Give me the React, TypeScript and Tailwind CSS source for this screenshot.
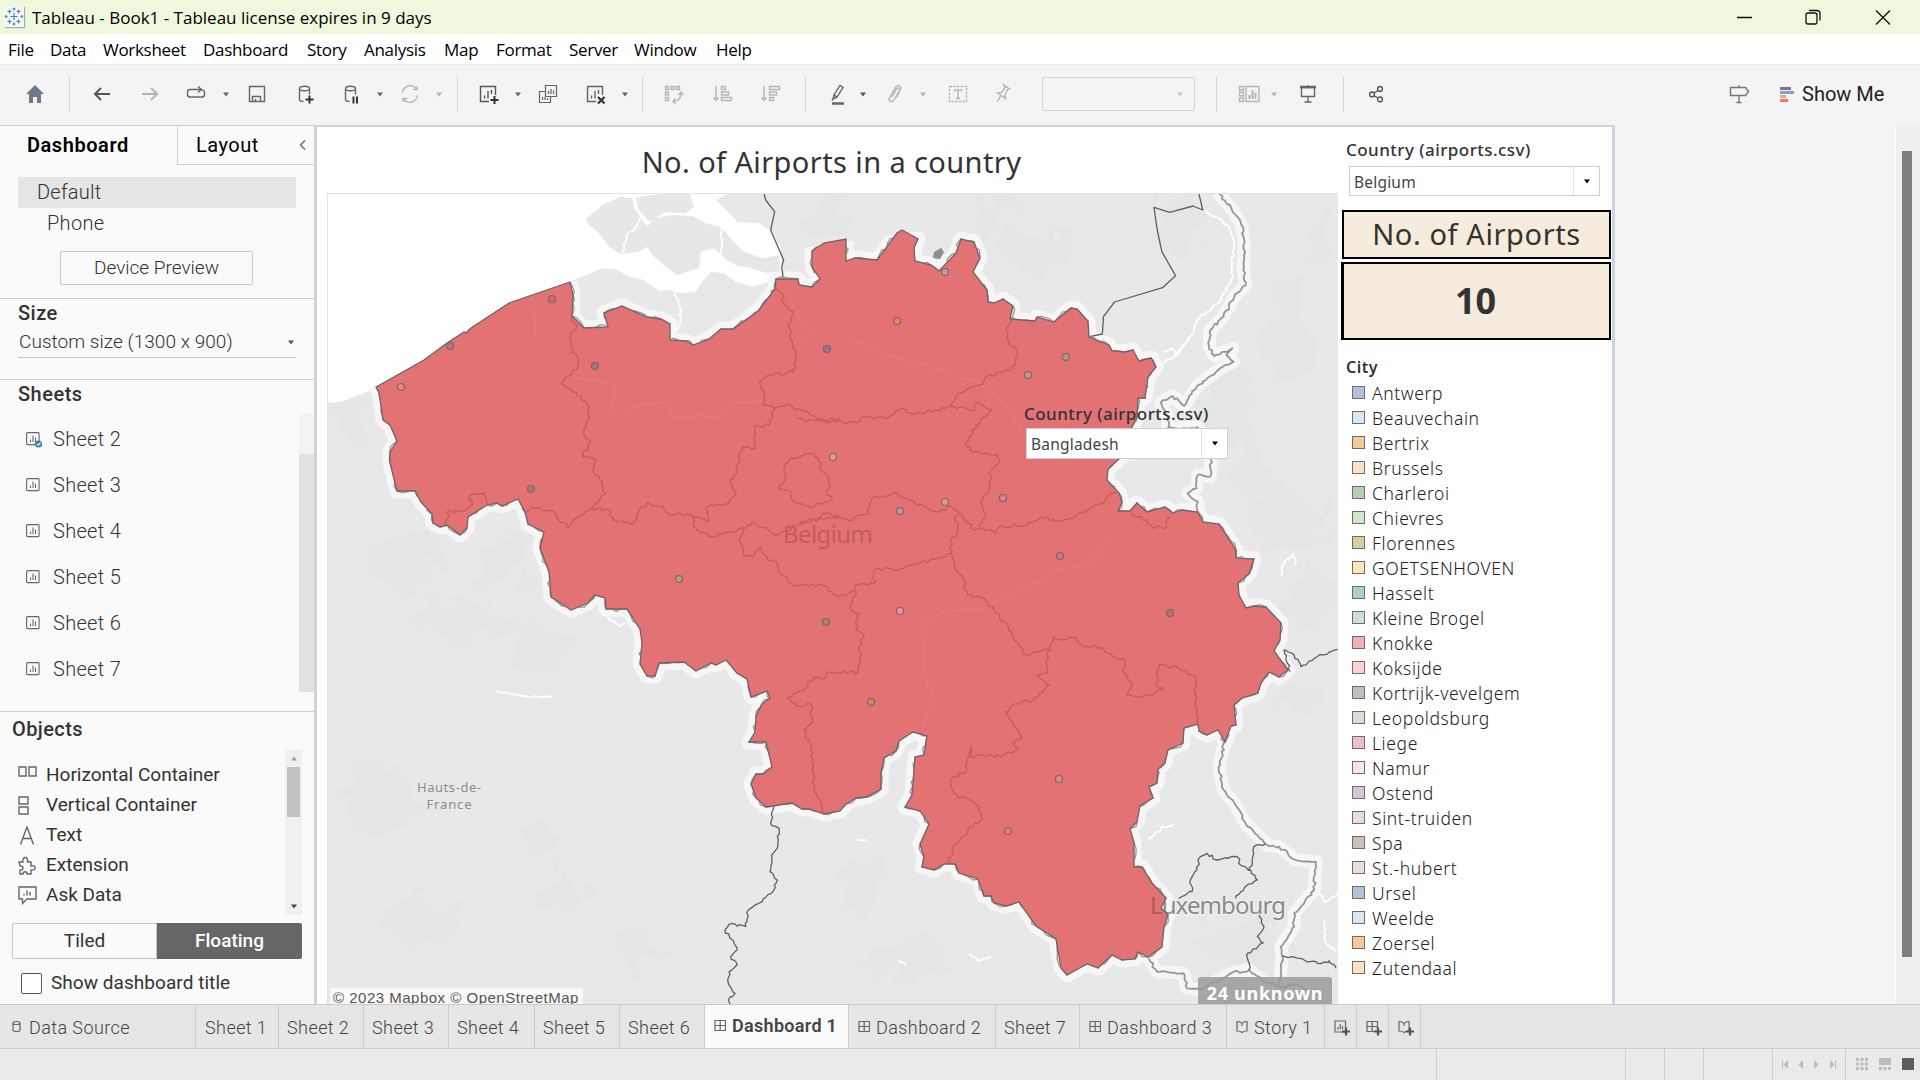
import React from "react";

/* ---------- toolbar glyphs (24px grid) ---------- */

const glyphs: Record<string, React.ReactNode> = {
  home: (
    <path d="M12 3 3 12h3v9h4v-6h4v6h4v-9h3z" fill="#6d7a8c" stroke="none" />
  ),
  back: <path d="M20 12H5M11 6l-6 6 6 6" strokeWidth="2" />,
  forward: <path d="M4 12h15M13 6l6 6-6 6" strokeWidth="2" />,
  replay: <path d="M8 7.500H6a2.500 2.500 0 0 0-2.500 2.500v2.500A2.500 2.500 0 0 0 6 15h12a2.500 2.500 0 0 0 2.500-2.500V10A2.500 2.500 0 0 0 18 8M8 7.500h9M14 4.500l3.500 3-3.500 3" />,
  save: <path d="M4.500 4.500h15v15h-15zM7.500 19.500v-5h8v5M10.500 19.500v-2.500" />,
  dbPlus: (
    <>
      <path d="M6.500 6.500c0-3 10-3 10 0s-10 3-10 0v11c0 1 1 2 4 2M16.500 6.500v6" />
      <path d="M16.500 13.500v8M12.500 17.500h8" stroke="#333" strokeWidth="2" />
    </>
  ),
  dbPause: (
    <>
      <path d="M6.500 6.500c0-3 10-3 10 0s-10 3-10 0v11c0 1 1 2 4 2M16.500 6.500v6" />
      <path d="M14.500 14.500v7M18 14.500v7" stroke="#333" strokeWidth="2" />
    </>
  ),
  refresh: <path d="M4.500 10.500a8 8 0 0 1 14-4M19.500 13.500a8 8 0 0 1-14 4M15 7.500h4v-3M9 16.500H5v3" />,
  chartPlus: (
    <>
      <path d="M19.500 13V4.500h-15v15H13M8.500 16.500v-3M12 16.500V9M15.500 12V8" />
      <path d="M18.500 14v8M14.500 18h8" stroke="#333" strokeWidth="2" />
    </>
  ),
  duplicate: <path d="M9.500 3.500h11v11h-11zM9.500 9.500h-6v11h11v-6M12.500 12v-3M15 12V7M17.500 12V8.500M6.500 18v-3M9 18v-3M11.500 18v-2" strokeWidth="1.200" />,
  chartX: (
    <>
      <path d="M19.500 13V4.500h-15v15H13M8.500 16.500v-3M12 16.500V9M15.500 12V8" />
      <path d="m15 15 6.500 6.500M21.500 15 15 21.500" stroke="#333" strokeWidth="2.200" />
    </>
  ),
  swap: <path d="M3.500 4.500h3v3h-3zM9 4.500h3v3H9zM14.500 4.500h3v3h-3zM3.500 10h3v3h-3zM3.500 15.500h3v3h-3zM11 19.500c5 0 8-3 8-9M16.500 13l2.500-3 2.500 3M13.500 22 11 19.500l2.500-3" />,
  sortAsc: <path d="M5 4v14M2.500 15.500 5 18.500l2.500-3M10.500 4.500h4v3h-4zM10.500 10h7v3h-7zM10.500 15.500h10v3h-10z" />,
  sortDesc: <path d="M5 4v14M2.500 15.500 5 18.500l2.500-3M10.500 4.500h10v3h-10zM10.500 10h7v3h-7zM10.500 15.500h4v3h-4z" />,
  pen: (
    <>
      <path d="m8 13 6-9.500 3 2-6 9.500zM8 13l-1 4 4-2M6 18.500l1-1.500" />
      <path d="M6 21.500h12" strokeWidth="2.500" />
    </>
  ),
  clip: <path d="m9 15 4.500-8c1.500-2 4-.5 3 1.500L11 18c-2 3.500-6 1-4.500-2l6-10.500C14.500 2 19 4 17.500 7.500L13 16" />,
  text: (
    <>
      <path d="M3.500 4.500h17v15h-17z" strokeDasharray="2.500 1.200" />
      <path d="M8.500 9.500V8h7v1.500M12 8v8.500M10 16.500h4" strokeWidth="1.300" />
    </>
  ),
  pin: <path d="m13 3 5.500 4-2 .5-2.500 5 .5 4L6.500 11l4-.5 3.500-5zM9.500 14l-3 5.500" />,
  layout: (
    <>
      <path d="M2.500 4.500h4v3.500h-4zM2.500 10.200h4v3.500h-4zM2.500 16h4v3.500h-4zM9 4.500h13v15H9z" />
      <path d="M12.500 17v-4M15.500 17V8M18.500 17v-6" strokeWidth="2" />
    </>
  ),
  present: (
    <>
      <path d="M5.500 5.500h13v9h-13zM12 15v5M8.500 20h7M12 3v2" />
      <path d="M4 5h16" strokeWidth="2.500" />
    </>
  ),
  share: <path d="M16 4.500a2.400 2.400 0 1 0 0 4.800 2.400 2.400 0 0 0 0-4.800M8 10a2.400 2.400 0 1 0 0 4.800A2.400 2.400 0 0 0 8 10M16 15a2.400 2.400 0 1 0 0 4.800 2.400 2.400 0 0 0 0-4.800M10 11l4-2.500M10 13.700l4 2.300" />,
  sign: <path d="M3.500 5.500h15l3 4-3 4h-15zM12 3v2.500M12 13.500V20M9.500 20.500h5" />,
};

type Tool = [string, string, string];

const tools: Tool[] = [
  ["home", "ml-[23px]", "text-[#666]"],
  ["sep", "ml-[22px]", ""],
  ["back", "ml-[20px]", "text-[#555]"],
  ["forward", "ml-[24px]", "text-[#b5b5b5]"],
  ["replay", "ml-[22px]", "text-[#666]"],
  ["caret", "ml-[14px]", "text-[#666]"],
  ["save", "ml-[15px]", "text-[#666]"],
  ["dbPlus", "ml-[24px]", "text-[#666]"],
  ["dbPause", "ml-[22px]", "text-[#666]"],
  ["caret", "ml-[13px]", "text-[#666]"],
  ["refresh", "ml-[14px]", "text-[#b5b5b5]"],
  ["caret", "ml-[13px]", "text-[#b5b5b5]"],
  ["sep", "ml-[14px]", ""],
  ["chartPlus", "ml-[18px]", "text-[#555]"],
  ["caret", "ml-[14px]", "text-[#666]"],
  ["duplicate", "ml-[14px]", "text-[#666]"],
  ["chartX", "ml-[23px]", "text-[#666]"],
  ["caret", "ml-[14px]", "text-[#666]"],
  ["sep", "ml-[13px]", ""],
  ["swap", "ml-[19px]", "text-[#b5b5b5]"],
  ["sortAsc", "ml-[25px]", "text-[#b5b5b5]"],
  ["sortDesc", "ml-[24px]", "text-[#b5b5b5]"],
  ["sep", "ml-[22px]", ""],
  ["pen", "ml-[20px]", "text-[#666]"],
  ["caret", "ml-[9px]", "text-[#555]"],
  ["clip", "ml-[16px]", "text-[#b5b5b5]"],
  ["caret", "ml-[12px]", "text-[#b5b5b5]"],
  ["text", "ml-[19px]", "text-[#b5b5b5]"],
  ["pin", "ml-[21px]", "text-[#b5b5b5]"],
  ["combo", "ml-[27px]", ""],
  ["sep", "ml-[21px]", ""],
  ["layout", "ml-[20px]", "text-[#b5b5b5]"],
  ["caret", "ml-[9px]", "text-[#b5b5b5]"],
  ["present", "ml-[18px]", "text-[#666]"],
  ["sep", "ml-[23px]", ""],
  ["share", "ml-[20px]", "text-[#555]"],
  ["sign", "ml-auto", "text-[#777]"],
];

function Caret({ className = "" }: { className?: string }) {
  return (
    <svg className={"shrink-0 " + className} width="8" height="5" viewBox="0 0 8 5">
      <path d="M1 .5h6L4 4.500z" fill="currentColor" />
    </svg>
  );
}

function ToolItem({ tool: [kind, gap, color] }: { tool: Tool }) {
  if (kind === "sep") return <div className={`${gap} h-[35px] w-px shrink-0 bg-[#d4d4d4]`} />;
  if (kind === "caret") return <Caret className={`${gap} ${color}`} />;
  if (kind === "combo")
    return (
      <div className={`${gap} flex h-[34px] w-[153px] shrink-0 items-center justify-end rounded-[2px] border border-[#d4d4d4] pr-2.5`}>
        <Caret className="text-[#c8c8c8]" />
      </div>
    );
  return (
    <svg className={`${gap} ${color} shrink-0`} width="24" height="24" viewBox="0 0 24 24" fill="none" stroke="currentColor" strokeWidth="1.400">
      {glyphs[kind]}
    </svg>
  );
}

function TitleBar() {
  return (
    <div className="flex h-[34px] shrink-0 items-center bg-[#eef8dc] pt-px pl-1 font-['Open_Sans',sans-serif] text-[17px] text-black">
      <svg width="20" height="21" viewBox="0 0 20 21" className="-mt-0.5 bg-[#f4f6f8] shadow-[1px_1px_1px_#aaa]" stroke="#3d86b4" strokeWidth="1.200">
        <path d="M10 7v7M6.500 10.500h7M5.500 3.500v4M3.500 5.500h4M14.500 3.500v4M12.500 5.500h4M5.500 13.500v4M3.500 15.500h4M14.500 13.500v4M12.500 15.500h4M10 1.500v3M8.500 3h3M10 16.500v3M8.500 18h3M2 9v3M1 10.500h2.500M18 9v3M16.500 10.500H19" />
      </svg>
      <span className="ml-2">Tableau - Book1 - Tableau license expires in 9 days</span>
      <svg className="mr-7 ml-auto" width="156" height="20" viewBox="0 0 156 20" fill="none" stroke="#111" strokeWidth="1.300">
        <path d="M1 9.500h15M140 2.500l14 14M154 2.500l-14 14" />
        <rect x="70" y="5" width="11" height="11" rx="2" />
        <path d="M73 2.500h8a3 3 0 0 1 3 3v7" />
      </svg>
    </div>
  );
}

const menus: [string, string][] = [
  ["File", "w-[42px]"],
  ["Data", "w-[53px]"],
  ["Worksheet", "w-[100px]"],
  ["Dashboard", "w-[104px]"],
  ["Story", "w-[57px]"],
  ["Analysis", "w-[80px]"],
  ["Map", "w-[52px]"],
  ["Format", "w-[73px]"],
  ["Server", "w-[65px]"],
  ["Window", "w-[82px]"],
  ["Help", "w-[60px]"],
];

function MenuBar() {
  return (
    <div className="flex h-[30px] shrink-0 items-center bg-white pt-0.5 pl-2 font-['Open_Sans',sans-serif] text-[17px] tracking-[-0.300px] text-black">
      {menus.map(([label, width]) => (
        <span key={label} className={`${width} whitespace-nowrap`}>{label}</span>
      ))}
    </div>
  );
}

function Toolbar() {
  return (
    <div className="flex h-[61px] shrink-0 items-center border-t border-[#ebebeb] bg-[#f4f4f4] pb-0.5">
      {tools.map((t, i) => (
        <ToolItem key={i} tool={t} />
      ))}
      <svg className="ml-[29px]" width="16" height="18" viewBox="0 0 16 18">
        <path d="M0 2h11v3H0z" fill="#8a6c9c" />
        <path d="M0 6h14v3H0z" fill="#7ba3cd" />
        <path d="M0 10h6v3H0z" fill="#f7a37c" />
        <path d="M0 14h8v3H0z" fill="#fb6f7f" />
      </svg>
      <span className="mr-9 ml-1.5 w-[82px] whitespace-nowrap text-[20px] text-[#222]">Show Me</span>
    </div>
  );
}

/* ---------- side pane ---------- */

function SheetIcon({ used = false }: { used?: boolean }) {
  return (
    <svg width="18" height="18" viewBox="0 0 18 18" fill="none" stroke="#666" strokeWidth="1.100">
      <rect x="0.600" y="2.600" width="12.500" height="12" rx="1" />
      <path d="M4.500 12V9.500M7 12V5.500M9.500 12V7.500" />
      {used && (
        <>
          <circle cx="12.500" cy="14" r="3.600" fill="#3b86a8" stroke="none" />
          <path d="m11 14 1.200 1.300 2.300-2.600" stroke="#fff" />
        </>
      )}
    </svg>
  );
}

const objects: [string, React.ReactNode][] = [
  ["Horizontal Container", <path key="p" d="M1 1h7v9H1zM11 1h7v9h-7z" />],
  ["Vertical Container", <path key="p" d="M1 1h9v7H1zM1 11h9v7H1z" />],
  ["Text", <path key="p" d="M2.500 18.500 9 1l6.500 17.500M4.800 12.500h8.400" />],
  ["Extension", <path key="p" d="M1 6h4c-1.500-6 6-6 4.500 0H13v4c5-2 6 5 0 4v4H9c0-3-4-3-4 0H2v-4c4 0 4-4 0-4z" />],
  ["Ask Data", <path key="p" d="M1 1h17v12H9l-4.500 4.500V13H1zM6 9.500V8M9 9.500V4.500M12 9.500V6" />],
];

function SidePane() {
  return (
    <div className="flex h-full w-[314px] shrink-0 flex-col border-t border-[#cfcfcf] bg-[#fafafa] text-[20px] font-light text-[#333]">
      <div className="flex h-[39px] shrink-0 text-black">
        <div className="w-[177px] pt-1 pl-[27px] font-semibold tracking-[0.550px]">Dashboard</div>
        <div className="flex flex-1 items-center border-b border-l border-[#cfcfcf] pl-[18px] font-normal">
          <span className="tracking-[0.500px]">Layout</span>
          <svg className="mr-2 ml-auto" width="7" height="10" viewBox="0 0 7 10" fill="none" stroke="#666" strokeWidth="1.300">
            <path d="M6 .5 1.500 5 6 9.500" />
          </svg>
        </div>
      </div>
      <div className="flex h-[134px] shrink-0 flex-col border-b border-[#cfcfcf] pt-3">
        <div className="mx-[18px] flex h-[31px] shrink-0 items-center bg-[#e5e5e5] pb-0.5 pl-[19px] tracking-[0.250px]">Default</div>
        <div className="flex h-[31px] shrink-0 items-center pb-0.5 pl-[47px] tracking-[0.300px]">Phone</div>
        <div className="mt-3 ml-[60px] flex h-[34px] w-[193px] items-center justify-center rounded-[2px] border border-[#c6c6c6] pt-px text-[19px]">Device Preview</div>
      </div>
      <div className="h-[81px] shrink-0 border-b border-[#cfcfcf] px-[18px]">
        <div className="h-[29px] leading-[28px] font-medium tracking-[0.500px]">Size</div>
        <div className="flex h-[30px] items-center justify-between border-b border-[#c6c6c6] pr-px text-[19px]">
          <span className="pl-px tracking-[0.050px]">Custom size (1300 x 900)</span>
          <Caret className="text-[#555]" />
        </div>
      </div>
      <div className="flex h-[332px] shrink-0 flex-col border-b border-[#cfcfcf]">
        <div className="h-[34px] pl-[18px] leading-[28px] font-medium tracking-[0.500px]">Sheets</div>
        <div className="flex flex-1">
          <div className="flex-1 pt-0.5">
            {["Sheet 2", "Sheet 3", "Sheet 4", "Sheet 5", "Sheet 6", "Sheet 7"].map((s, i) => (
              <div key={s} className="flex h-[46px] items-center pl-[26px]">
                <SheetIcon used={i === 0} />
                <span className="pl-[9px] tracking-[0.300px]">{s}</span>
              </div>
            ))}
          </div>
          <div className="h-[278px] w-[15px] bg-[#f3f3f3] pt-10">
            <div className="h-[238px] bg-[#e1e1e1]" />
          </div>
        </div>
      </div>
      <div className="h-[38px] pl-3 leading-[34px] font-medium tracking-[0.400px]">Objects</div>
      <div className="flex h-[165px] shrink-0 pr-3 font-normal">
        <div className="flex-1 pt-2.5">
          {objects.map(([label, icon]) => (
            <div key={label} className="flex h-[30px] items-center pl-[18px] text-[19px]">
              <svg width="19" height="19" viewBox="0 0 19 19" fill="none" stroke="#666" strokeWidth="1.400">{icon}</svg>
              <span className="pl-[9px]">{label}</span>
            </div>
          ))}
        </div>
        <div className="flex w-[17px] flex-col items-center bg-[#f0f0f0] py-1.5">
          <Caret className="rotate-180 text-[#a0a0a0]" />
          <div className="mt-1.5 h-[50px] w-[13px] bg-[#c1c1c1]" />
          <Caret className="mt-auto text-[#444]" />
        </div>
      </div>
      <div className="mx-3 mt-2 flex h-9 shrink-0 text-[19px]">
        <div className="flex w-[145px] items-center justify-center rounded-l-[2px] border border-[#c6c6c6] font-normal">Tiled</div>
        <div className="flex w-[145px] items-center justify-center rounded-r-[2px] bg-[#666] font-medium text-white">Floating</div>
      </div>
      <div className="mt-[11px] flex h-[26px] items-center pl-[21px] text-[19px] font-normal">
        <div className="h-[21px] w-[21px] rounded-[2px] border border-[#555] bg-white" />
        <span className="pl-[9px] tracking-[0.050px]">Show dashboard title</span>
      </div>
    </div>
  );
}

/* ---------- map ---------- */

const BELGIUM =
  "377,387 425,360 448,343 465,332 467,333 472,328 510,303 571,282 574,295 573,316 585,328 609,327 605,313 623,306 648,317 662,319 671,324 671,340 687,341 694,345 710,339 722,329 734,329 759,311 776,289 777,279 799,279 800,285 813,287 821,279 813,267 813,251 825,243 847,239 847,261 856,258 878,260 898,233 903,230 919,239 915,248 916,261 932,265 940,271 957,253 962,239 975,242 981,258 974,272 988,290 989,302 995,303 1004,299 1014,306 1011,319 1036,321 1038,317 1055,322 1072,308 1078,309 1089,321 1090,337 1110,345 1113,351 1125,352 1134,350 1140,361 1152,358 1157,367 1149,377 1146,398 1139,398 1138,417 1132,429 1128,452 1120,459 1109,469 1108,480 1120,493 1123,502 1119,511 1131,511 1138,503 1148,512 1166,507 1174,513 1183,510 1199,512 1204,522 1220,524 1237,550 1237,558 1255,559 1250,574 1239,583 1240,595 1247,608 1255,606 1267,607 1282,623 1281,640 1275,651 1289,670 1280,677 1270,672 1262,683 1259,693 1243,698 1235,705 1237,725 1232,726 1226,742 1219,730 1208,735 1200,731 1199,724 1185,728 1184,743 1169,750 1166,763 1159,769 1158,783 1150,787 1154,798 1141,806 1138,822 1131,829 1135,842 1135,867 1143,867 1153,883 1167,898 1162,908 1169,915 1165,927 1163,947 1149,957 1139,952 1136,959 1123,960 1113,955 1099,968 1088,964 1068,975 1062,968 1057,939 1037,926 1020,902 1007,906 995,903 992,896 985,896 979,879 960,873 956,864 945,864 935,870 923,867 925,857 921,844 930,824 921,811 906,807 913,795 916,757 925,755 928,736 914,732 900,741 897,751 885,758 882,773 882,789 868,797 857,798 847,804 841,811 825,814 810,809 803,809 793,803 767,807 757,798 752,784 757,774 764,774 773,767 767,742 750,742 756,732 757,716 763,704 771,698 768,691 752,697 748,679 738,673 727,660 717,665 712,663 697,671 685,662 660,663 656,676 648,676 641,664 643,643 641,629 628,609 607,609 606,598 596,595 589,603 572,610 552,597 550,572 541,548 545,532 529,524 526,512 519,499 503,506 498,503 488,505 469,517 468,528 461,535 448,525 441,527 434,523 433,514 422,502 416,491 398,491 391,463 391,452 398,441 391,425 384,420 380,393";

const NW = "translate(320 180) scale(.33333)";
const NE = "translate(780 180) scale(.3585 .33333)";
const SW = "translate(480 560) scale(.33333)";
const SE = "translate(880 540) scale(.33479 .33333)";

const provinces: [string, string][] = [
  [NW, "758,408 772,445 755,465 755,500 780,545 770,570 727,608 760,635 805,670 812,715 795,745 800,775 815,785 790,830 825,835 822,870 850,905 860,940 815,985 780,1010 745,1045 710,1000 650,985 618,995"],
  [NW, "815,985 870,990 880,1020 945,1030 960,990 990,970 1030,978 1060,1005 1120,1005 1165,1025 1160,980 1230,970 1250,935 1232,900 1255,880 1258,830 1270,800 1308,805 1305,740 1350,735 1367,685 1332,675 1335,645 1322,610 1350,585 1425,577 1432,540 1430,510 1420,490 1408,430 1425,400 1395,370 1390,340 1371,322"],
  [NW, "1367,685 1400,675 1430,690 1470,700 1510,725 1560,715"],
  [NE, "50,715 95,722 160,725 215,728 235,710 295,715 345,685 370,705 480,680 500,640 560,615 580,590 625,578 660,555 665,515 635,475 635,440 650,420"],
  [NE, "480,680 545,690 555,665 595,690 565,715 550,735 520,790 540,815 610,822 612,850 590,870 585,930 565,960 575,1000 560,1045 605,1060 620,1038 690,1035 730,1010 790,1025 835,1000 900,970 925,940 948,938"],
  [NW, "1410,840 1440,832 1485,820 1500,835 1505,870 1530,890 1535,915 1520,940 1540,955 1475,983 1420,960 1405,930 1378,925 1400,895 1395,870 1410,840"],
  [NW, "1120,1005 1130,1045 1170,1070 1235,1055 1280,1045 1300,1025 1350,1050 1375,1065 1440,1035 1520,1000 1560,1010"],
  [NE, "56,1030 150,1015 190,1020 250,1000 260,955 330,940 380,970 440,995 480,980 510,1005 545,1050 560,1045"],
  [NW, "1270,1045 1265,1090 1275,1130 1300,1130 1325,1100 1345,1140 1375,1150 1380,1178"],
  [NE, "0,1178 50,1218 120,1215 170,1250 210,1235 215,1215 265,1210 270,1165 320,1170 440,1135 480,1120 480,1085 500,1050 490,1010 505,1000"],
  [NE, "480,1120 490,1160 515,1195 525,1245 560,1250 600,1290 640,1340 655,1380 690,1425 735,1410 760,1410"],
  [SE, "510,330 520,290 550,300 585,290 610,320 645,315 700,350 735,362 730,395 755,425 740,465 800,468 850,445 830,440 838,375 890,382 945,408 947,520 955,553"],
  [SE, "510,330 500,370 505,400 470,405 508,435 460,480 410,490 378,515 400,545 427,590 400,610 415,630 370,645 275,650 273,620 262,690 213,722 235,773 270,775 300,800 308,838 265,870 260,885 222,915 215,950 205,972"],
  [SW, "1130,95 1115,145 1140,160 1130,210 1155,225 1140,265 1145,290 1138,338 1050,335 1040,355 1005,352 980,385 925,412 965,440 985,430 1000,440 998,490 975,510 998,560 1000,630 1010,700 1030,740 1035,763"],
  [NW, "380,1034 385,995 430,993 460,975 450,950 495,937 505,970"],
  [NE, "980,1000 1010,1010 1040,1040 1075,1045 1092,1010"],
];

const borders: [string, string][] = [
  [NE, "1222,36 1262,85 1290,135 1298,190 1295,270 1302,315 1270,350 1240,410 1203,450 1200,500 1215,528 1265,505 1248,525 1268,545 1225,570 1165,620 1130,678 1098,648 1065,668 1085,710 1085,745 1168,742 1205,840 1202,890 1168,885 1165,925 1140,940 1168,965 1168,997"],
  [SE, "1033,605 1015,680 1030,750 1065,795 1095,850 1130,885 1160,915 1195,920 1245,960 1305,965 1300,1050 1240,1120 1240,1160 1200,1220 1205,1250 1195,1340"],
  [SE, "805,1255 830,1295 910,1300 920,1345 960,1350 1050,1300 1105,1290 1150,1325 1195,1340 1250,1335 1300,1360"],
];

const regions: [string, string][] = [
  [NW, "1334,36 1340,60 1367,95 1355,150 1394,240 1388,260 1393,296"],
  [NE, "1170,36 1182,90 1155,78 1090,97 1046,82 1055,150 1068,215 1106,287 1070,323 936,366 905,410 902,462 866,470"],
];

const roughRegions: [string, string][] = [
  [SW, "884,741 875,790 900,805 897,855 878,885 873,935 895,960 883,993 850,1025 808,1050 800,1100 750,1093 738,1110 765,1150 775,1165 755,1190 775,1215 750,1235 750,1275 768,1300 748,1320 750,1340"],
  [SE, "895,1075 935,1055 930,1020 950,990 960,950 980,940 1010,960 1070,950 1080,975 1110,990 1130,1020 1100,1035 1065,1075"],
  [SE, "1155,910 1120,920 1115,975 1105,990"],
  [SE, "1135,1120 1150,1160 1130,1190 1148,1208 1100,1240 1105,1290"],
  [SE, "1205,1248 1270,1260 1310,1270 1345,1262 1365,1285"],
  [SE, "1228,395 1210,330 1240,345 1260,380 1300,355 1370,328"],
];

const waterways: [string, string][] = [
  [NE, "1190,90 1255,140 1270,190 1262,300 1225,370 1165,420 1155,460 1110,520 1070,550"],
  [NE, "1112,520 1095,505 1070,515"],
  [NE, "1105,530 1125,495"],
  [NW, "966,110 955,140 922,165 908,220"],
  [NW, "1205,140 1207,220"],
  [NW, "1068,335 1085,385 1083,430 1070,455"],
  [NE, "1400,1190 1408,1150 1435,1120 1440,1155"],
  [SE, "1330,1140 1335,1210 1365,1235"],
  [SE, "1310,1060 1335,1085 1370,1060"],
  [SE, "805,900 850,860 880,855"],
  [SE, "270,1240 295,1262 335,1248"],
  [SW, "50,393 100,400 140,410 220,410"],
  [SW, "380,170 420,200 440,190"],
  [SW, "1135,838 1165,845"],
  [SW, "1258,1200 1280,1215"],
];

const rivers: [string, string][] = [
  [SE, "130,560 165,480 135,400 130,245 190,215 310,205 400,165 540,90 630,70 685,0"],
  [NE, "190,470 300,520 420,560 560,610 630,670 680,760"],
  [NW, "925,685 1040,665 1060,715 1140,705 1200,715 1250,670 1330,665"],
  [NW, "760,590 890,615 880,690"],
  [NW, "640,350 650,470"],
  [NW, "1400,330 1440,420 1480,455 1430,510"],
];

const airports: [number, number, string][] = [
  [553, 299, "#e2666a"], [451, 346, "#c06f88"], [402, 387, "#ee8387"], [596, 366, "#a3718b"],
  [532, 489, "#b1706f"], [680, 579, "#b99a72"], [828, 349, "#a3718b"], [898, 321, "#e9834f"],
  [946, 272, "#c497a9"], [1029, 375, "#cf8f8c"], [1067, 357, "#b98f8c"], [834, 457, "#ef9a78"],
  [946, 502, "#e99b6a"], [901, 511, "#c58fa3"], [1004, 498, "#d9829a"], [1061, 556, "#cf6f88"],
  [1171, 613, "#b3746a"], [901, 611, "#ef93a2"], [827, 622, "#a58a60"], [872, 702, "#cc8850"],
  [1060, 779, "#dc8f88"], [1009, 831, "#e9834f"],
];

const patches: [number, number, number, number][] = [
  [350, 420, 18, 22], [400, 560, 40, 25], [505, 560, 24, 30], [470, 620, 50, 18], [540, 650, 30, 20], [550, 840, 20, 15],
  [1000, 210, 22, 14], [1040, 250, 40, 20], [1180, 230, 25, 30], [1230, 400, 30, 40], [1290, 330, 20, 60], [1290, 520, 40, 30],
  [1310, 600, 20, 30], [1250, 470, 20, 30], [1320, 240, 14, 30], [830, 220, 25, 20], [1300, 700, 25, 14], [560, 900, 30, 20],
  [640, 950, 26, 14], [860, 880, 25, 30], [1060, 830, 12, 10], [380, 800, 30, 40], [420, 920, 40, 20], [900, 960, 50, 16], [1250, 940, 50, 20],
];

/* Breaks each segment into short steps with a seeded sideways jitter, for natural boundaries. */
function roughen(points: string, step: number, amount: number) {
  const pts = points.split(" ").map((p) => p.split(",").map(Number));
  let seed = pts.length * 7919 + pts[0][0];
  const rand = () => {
    seed = (seed * 1103515245 + 12345) % 2147483648;
    return (seed / 2147483648) * 2 - 1;
  };
  const out = [pts[0].join(",")];
  for (let i = 1; i < pts.length; i++) {
    const [x0, y0] = pts[i - 1];
    const [x1, y1] = pts[i];
    const len = Math.hypot(x1 - x0, y1 - y0);
    const n = Math.max(1, Math.round(len / step));
    for (let k = 1; k < n; k++) {
      const t = k / n + (rand() * 0.4) / n;
      const j = rand() * amount;
      out.push(`${(x0 + (x1 - x0) * t - ((y1 - y0) / len) * j).toFixed(1)},${(y0 + (y1 - y0) * t + ((x1 - x0) / len) * j).toFixed(1)}`);
    }
    out.push(`${x1},${y1}`);
  }
  return out.join(" ");
}

type LinesProps = { data: [string, string][]; rough?: number } & React.SVGProps<SVGGElement>;

function Lines({ data, rough = 0, ...rest }: LinesProps) {
  return (
    <g fill="none" strokeLinejoin="round" {...rest}>
      {data.map(([transform, points], i) => (
        <polyline key={i} transform={transform} points={rough ? roughen(points, 9, rough) : points} vectorEffect="non-scaling-stroke" />
      ))}
    </g>
  );
}

function AirportMap() {
  return (
    <svg className="block" width="1010" height="810" viewBox="329 194 1010 810" fontFamily="Noto Sans, sans-serif">
      <defs>
        <filter id="patchy" filterUnits="userSpaceOnUse" x="327" y="193" width="1015" height="811" colorInterpolationFilters="sRGB">
          <feTurbulence type="fractalNoise" baseFrequency="0.040" numOctaves="4" seed="9" />
          <feDisplacementMap in="SourceGraphic" scale="60" xChannelSelector="R" yChannelSelector="G" />
        </filter>
        <clipPath id="inland">
          <path d="M377 387 425 360 465 332 510 303 571 282 1342 170V1010H327V403z" />
        </clipPath>
        <clipPath id="west">
          <path d="M1140 880h28l-6 28 5 20h-27z" />
        </clipPath>
      </defs>
      <rect x="327" y="190" width="1015" height="820" fill="#e8e8e8" />
      <g fill="#e4e5e5" filter="url(#patchy)">
        {patches.map(([cx, cy, rx, ry], i) => (
          <ellipse key={i} cx={cx} cy={cy} rx={rx} ry={ry} />
        ))}
      </g>
      <g transform={NW}>
        <path fill="#fff" d="M20 35H1240L1190 60 1230 100 1255 125 1320 130 1360 155 1385 200 1390 285 1371 300 1300 320 1250 305 1215 280 1175 275 1150 305 1130 335 1090 340 1050 330 1020 332 975 300 930 290 890 268 850 265 752 305 570 370 435 455 315 540 171 625 75 662 45 668 20 665z" />
        <path fill="#e7e7e7" d="M802 115 850 75 905 50 940 55 945 85 985 140 1005 115 1060 105 1120 108 1160 130 1205 140 1240 180 1275 215 1330 235 1380 225 1385 275 1340 278 1285 262 1255 258 1225 240 1185 205 1145 215 1140 265 1075 285 1040 260 1000 225 985 200 960 215 905 223 870 200 840 160 805 130zM950 55 1000 45 1110 35 1125 80 1100 100 1040 97 990 125 960 90z" />
      </g>
      <Lines data={waterways} stroke="#fff" strokeWidth="1.800" rough={4} />
      <polygon points={BELGIUM} fill="none" stroke="#f6f6f6" strokeWidth="15" strokeLinejoin="round" clipPath="url(#inland)" />
      <Lines data={borders} stroke="#f6f6f6" strokeWidth="13" />
      <Lines data={borders} stroke="#969696" strokeWidth="1.800" rough={4} />
      <Lines data={regions} stroke="#5f5f5f" strokeWidth="1.300" />
      <Lines data={roughRegions} stroke="#5f5f5f" strokeWidth="1.300" rough={4.5} />
      <path d="m935 252 7-4 3 4-4 7-7-1z" fill="#8d8d8d" />
      <polyline points={roughen(BELGIUM, 5, 2.5)} fill="none" stroke="#999" strokeWidth="1.300" clipPath="url(#inland)" />
      <text x="1151" y="914" fontSize="24" fill="#8b8b8b" stroke="#f1f1f1" strokeWidth="2" paintOrder="stroke" textLength="136">Luxembourg</text>
      <polygon points={BELGIUM} fill="#e27273" stroke="#6e6464" strokeWidth="1.300" />
      <Lines data={rivers} stroke="#e67c7d" strokeWidth="1.200" rough={4} />
      <Lines data={provinces} stroke="#cb5a5d" strokeWidth="1.300" rough={5.5} />
      <text x="784" y="543" fontSize="24" fill="#c9595c" textLength="90">Belgium</text>
      <text x="1151" y="914" fontSize="24" fill="#b35759" textLength="136" clipPath="url(#west)">Luxembourg</text>
      <g fontSize="13" fill="#8c8c8c" textAnchor="middle">
        <text x="450" y="792" textLength="64">Hauts-de-</text>
        <text x="450" y="809" textLength="45">France</text>
      </g>
      {airports.map(([cx, cy, fill], i) => (
        <circle key={i} cx={cx} cy={cy} r="3.500" fill={fill} stroke="#7b6868" strokeWidth="1.200" />
      ))}
    </svg>
  );
}

/* ---------- dashboard ---------- */

function Select({ value, size }: { value: string; size: string }) {
  return (
    <div className={`flex items-center border border-[#cfcfcf] bg-white text-[15.500px] text-[#444] ${size}`}>
      <span className="flex-1 pt-[3px] pl-1 tracking-[0.200px]">{value}</span>
      <span className="flex h-full w-[26px] items-center justify-center border-l border-[#e0e0e0]">
        <Caret className="text-black" />
      </span>
    </div>
  );
}

const cities: [string, string][] = [
  ["Antwerp", "bg-[#b0c2da]"], ["Beauvechain", "bg-[#d6e7f5]"], ["Bertrix", "bg-[#f8c99a]"], ["Brussels", "bg-[#fee0c4]"],
  ["Charleroi", "bg-[#b3d3ae]"], ["Chievres", "bg-[#cfeac9]"], ["Florennes", "bg-[#dacd9d]"], ["GOETSENHOVEN", "bg-[#fae8b5]"],
  ["Hasselt", "bg-[#abcfcc]"], ["Kleine Brogel", "bg-[#c9e0dd]"], ["Knokke", "bg-[#f2b2b3]"], ["Koksijde", "bg-[#ffd2d1]"],
  ["Kortrijk-vevelgem", "bg-[#c3bfbe]"], ["Leopoldsburg", "bg-[#dfdbd8]"], ["Liege", "bg-[#eabecf]"], ["Namur", "bg-[#fee2eb]"],
  ["Ostend", "bg-[#d9c3d4]"], ["Sint-truiden", "bg-[#ecd9e7]"], ["Spa", "bg-[#d0bfb6]"], ["St.-hubert", "bg-[#ecdfd7]"],
  ["Ursel", "bg-[#b0c2da]"], ["Weelde", "bg-[#d6e7f5]"], ["Zoersel", "bg-[#f8c99a]"], ["Zutendaal", "bg-[#fee0c4]"],
];

function Canvas() {
  return (
    <div className="flex h-full w-[1301px] shrink-0 overflow-hidden border-x-[3px] border-t-2 border-[#cbd5de] bg-white font-['Noto_Sans',sans-serif]">
      <div className="flex w-[1021px] shrink-0 flex-col">
        <div className="flex h-[66px] shrink-0 items-center justify-center pt-1 pl-2 text-[29px] tracking-[0.400px] text-[#333]">
          <span className="whitespace-nowrap">No. of Airports in a country</span>
        </div>
        <div className="relative ml-[10px] h-[811px] w-[1011px] border-t border-l border-[#e3e3e3]">
          <AirportMap />
          <div className="absolute top-[206px] left-[696px] w-[205px]">
            <div className="h-7 text-[17px] leading-[27px] font-medium tracking-[0.450px] whitespace-nowrap text-[#333]">Country (airports.csv)</div>
            <div className="pl-[2px]"><Select value="Bangladesh" size="h-[31px] w-[202px]" /></div>
          </div>
          <div className="absolute bottom-[-6px] left-[2px] h-[22px] w-[253px] bg-[#f8f8f8] pl-[3px] font-['Liberation_Sans',sans-serif] text-[15px] leading-[20px] tracking-[0.500px] whitespace-nowrap text-[#555]">
            © 2023 Mapbox © OpenStreetMap
          </div>
          <div className="absolute right-[6px] bottom-[-6px] h-[33px] w-[134px] rounded-[3px] bg-[#9a9a9a]/85 text-center text-[18px] leading-[32px] font-bold tracking-[0.700px] whitespace-nowrap text-white">
            24 unknown
          </div>
        </div>
      </div>
      <div className="flex flex-1 flex-col pt-[9px] pl-[3px]">
        <div className="h-[30px] pl-[5px] text-[17px] leading-[28px] font-medium tracking-[0.450px] text-[#333]">Country (airports.csv)</div>
        <div className="pl-2"><Select value="Belgium" size="h-[30px] w-[251px]" /></div>
        <div className="mt-[14px] ml-px flex h-[49px] w-[269px] shrink-0 items-center justify-center border-2 border-black bg-[#f5ecdb] pb-0.5 text-[29px] tracking-[0.600px] text-[#333]">
          No. of Airports
        </div>
        <div className="mt-[3px] flex h-[78px] w-[270px] shrink-0 items-center justify-center border-2 border-l-[3px] border-black bg-[#f5ecdb] pr-0.5 text-[36px] font-bold text-[#333]">
          10
        </div>
        <div className="mt-[15px] h-[25px] pl-[5px] text-[16px] leading-[25px] font-semibold tracking-[0.500px] text-[#333]">City</div>
        {cities.map(([name, swatch]) => (
          <div key={name} className="flex h-[25px] shrink-0 items-center pl-[11px] text-[17.500px]">
            <span className={`mb-px h-[13px] w-[13px] border border-[#6d6d6d] ${swatch}`} />
            <span className="pt-px pl-[7px] font-light tracking-[0.600px] text-[#222]">{name}</span>
          </div>
        ))}
      </div>
    </div>
  );
}

/* ---------- bottom bars ---------- */

function TabGlyph({ kind, plus = false }: { kind: string; plus?: boolean }) {
  return (
    <svg className="shrink-0" width={plus ? 17 : 12} height="18" viewBox={plus ? "0 0 17 18" : "0 0 12 18"} fill="none" stroke="#666" strokeWidth="1.200">
      {kind === "data" && <path d="M2 5c0-2 7-2 7 0s-7 2-7 0v7c0 2 7 2 7 0V5" />}
      {kind === "dash" && <path d="M1 3.500h10.500v10H1zM6.200 3.500v10M1 8.500h10.500" />}
      {kind === "story" && <path d="M6 5.500C4.500 3.500 3.500 3.500 1 3.500V13c2 0 3.500 0 5 1.500 1.500-1.500 3-1.500 5-1.500V3.500c-2.500 0-3.500 0-5 2zM6 5.500V8" />}
      {kind === "sheet" && <path d="M1 3h10.500v11H1zM4 11.500V9M6.200 11.500V6M8.500 11.500V8" />}
      {plus && <path d="M12 9.500v8M8 13.500h8" stroke="#555" strokeWidth="2.200" />}
    </svg>
  );
}

const tabs: [string, string, string][] = [
  ["Data Source", "data", "w-[196px] pl-[11px]"],
  ["Sheet 1", "", "w-[83px] pl-[9px]"],
  ["Sheet 2", "", "w-[85px] pl-[8px]"],
  ["Sheet 3", "", "w-[85px] pl-[8px]"],
  ["Sheet 4", "", "w-[86px] pl-[8px]"],
  ["Sheet 5", "", "w-[85px] pl-[8px]"],
  ["Sheet 6", "", "w-[85px] pl-[8px]"],
  ["Dashboard 1", "dash", "w-[144px] pl-[9px]"],
  ["Dashboard 2", "dash", "w-[147px] pl-[9px]"],
  ["Sheet 7", "", "w-[84px] pl-[8px]"],
  ["Dashboard 3", "dash", "w-[147px] pl-[9px]"],
  ["Story 1", "story", "w-[98px] pl-[9px]"],
];

function TabBar() {
  return (
    <div className="flex h-[45px] shrink-0 border-y border-[#cacaca] bg-[#e6e6e6] text-[18px] font-light text-[#444]">
      {tabs.map(([label, icon, box]) => {
        const active = label === "Dashboard 1";
        return (
          <div key={label} className={`flex shrink-0 items-center gap-[6px] border-r border-[#cacaca] whitespace-nowrap ${box} ${active ? "bg-[#fafafa] pb-0.5 font-semibold" : "pt-px"}`}>
            {icon && <TabGlyph kind={icon} />}
            <span className={active ? "tracking-[0.300px]" : "tracking-[0.420px]"}>{label}</span>
          </div>
        );
      })}
      {["sheet", "dash", "story"].map((k) => (
        <div key={k} className="flex w-8 shrink-0 items-center border-r border-[#cacaca] pl-[9px]">
          <TabGlyph kind={k} plus />
        </div>
      ))}
    </div>
  );
}

function StatusBar() {
  return (
    <div className="flex h-[31px] shrink-0 bg-[#eaeaea]">
      {["w-[1437px]", "w-[189px]", "w-[39px]", "w-[39px]", "w-[69px]"].map((w, i) => (
        <div key={i} className={`${w} shrink-0 border-r border-[#cfcfcf]`} />
      ))}
      <div className="flex w-[73px] items-center justify-center border-r border-[#cfcfcf]">
        <svg width="56" height="9" viewBox="0 0 56 9" fill="#bcbcbc">
          <path d="M1 0h1v9H1zM7 0v9L2.500 4.500zM22 0v9l-4.500-4.500zM33 0v9l4.500-4.500zM49 0v9l4.500-4.500zM54 0h1v9h-1z" />
        </svg>
      </div>
      <svg className="mt-[9px] ml-[10px]" width="58" height="12" viewBox="0 0 58 12" fill="#bcbcbc">
        <path d="M0 0h3v3H0zM4.500 0h3v3h-3zM9 0h3v3H9zM0 4.500h3v3H0zM4.500 4.500h3v3h-3zM9 4.500h3v3H9zM0 9h3v3H0zM4.500 9h3v3h-3zM9 9h3v3H9zM23 0h12v7H23zM23 9h3v3h-3zM27.500 9h3v3h-3zM32 9h3v3h-3z" />
        <path d="M46 0h12v12H46z" fill="#5e5e5e" />
      </svg>
    </div>
  );
}

export default function App() {
  return (
    <div className="flex h-[1080px] w-[1920px] flex-col overflow-hidden bg-[#f4f4f4] font-['Roboto',sans-serif]">
      <TitleBar />
      <MenuBar />
      <Toolbar />
      <div className="flex h-[879px] shrink-0 overflow-hidden">
        <SidePane />
        <Canvas />
        <div className="ml-auto w-[25px] border-l border-[#fafafa] bg-[#efefef] pt-[26px] pl-[6px]">
          <div className="h-[806px] w-[10px] bg-[#7d7d7d]" />
        </div>
      </div>
      <TabBar />
      <StatusBar />
    </div>
  );
}
